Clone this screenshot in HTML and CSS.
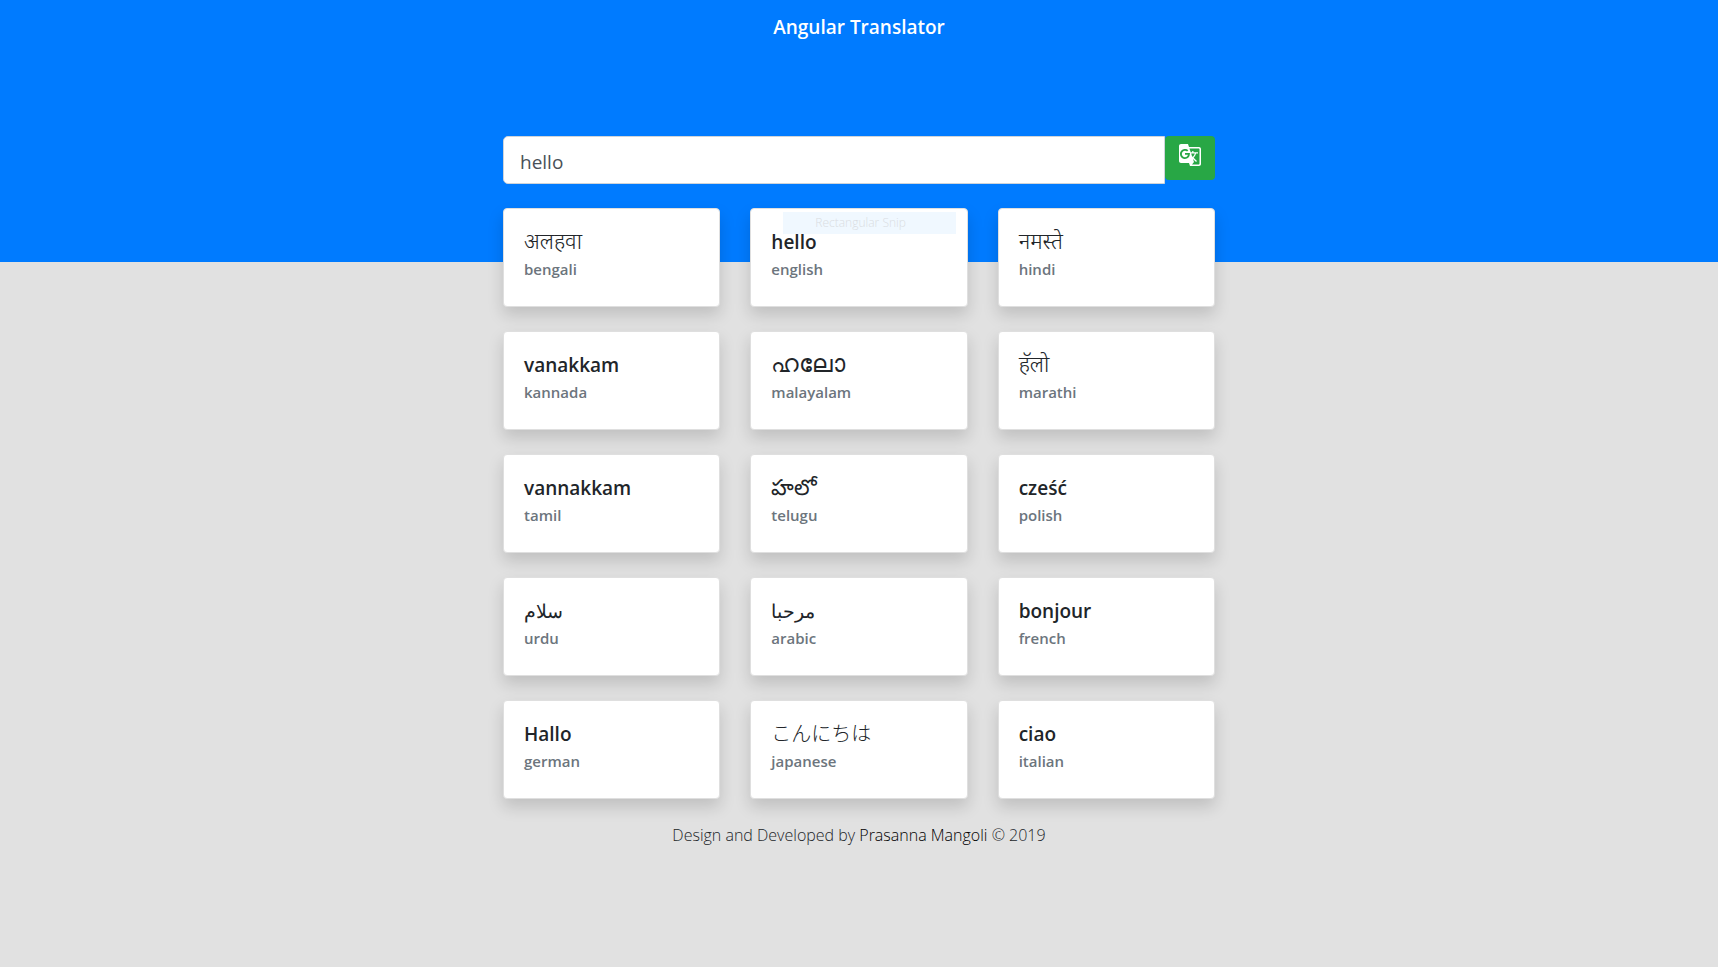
FILE: index.html
```html
<!DOCTYPE html>
<html lang="en">
<head>
<meta charset="utf-8">
<title>Angular Translator</title>
<link rel="stylesheet" href="styles.css">
</head>
<body>
<header class="hero"><h1 class="brand">Angular Translator</h1></header>
<main class="content">
  <form class="search">
    <input class="search-input" type="text" value="hello" aria-label="Text to translate">
    <button class="search-button" type="button" aria-label="Translate">
      <svg class="search-icon" viewBox="0 0 24 24" aria-hidden="true"><path fill="currentColor" d="M21 4H11l-1-3H3c-1.100 0-2 .9-2 2v15c0 1.100.9 2 2 2h8l1 3h9c1.100 0 2-.9 2-2V6c0-1.100-.9-2-2-2zM7 16c-2.760 0-5-2.240-5-5s2.240-5 5-5c1.350 0 2.480.5 3.350 1.300L9.030 8.570c-.38-.36-1.040-.78-2.030-.78-1.740 0-3.150 1.440-3.150 3.210S5.260 14.210 7 14.210c2.010 0 2.840-1.440 2.920-2.410H7v-1.710h4.680c.7.310.12.610.12 1.020C11.800 13.970 9.890 16 7 16zm6.170-5.420h3.700c-.43 1.250-1.110 2.430-2.050 3.470-.31-.35-.6-.72-.86-1.100l-.79-2.370zm8.330 9.920c0 .55-.45 1-1 1H14l2-2.500-1.040-3.100 3.100 3.100.92-.92-3.300-3.250.02-.02c1.130-1.250 1.930-2.690 2.400-4.220H20v-1.300h-4.530V8h-1.290v1.290h-1.440L11.460 5.500h9.040c.55 0 1 .45 1 1v14z"/></svg>
    </button>
  </form>
  <section class="cards" aria-label="Translations">
    <article class="card"><h2 class="word indic">अलहवा</h2><p class="lang">bengali</p></article>
    <article class="card"><span class="snip">Rectangular Snip</span><h2 class="word">hello</h2><p class="lang">english</p></article>
    <article class="card"><h2 class="word indic">नमस्ते</h2><p class="lang">hindi</p></article>
    <article class="card"><h2 class="word">vanakkam</h2><p class="lang">kannada</p></article>
    <article class="card"><h2 class="word malayalam">ഹലോ</h2><p class="lang">malayalam</p></article>
    <article class="card"><h2 class="word indic">हॅलो</h2><p class="lang">marathi</p></article>
    <article class="card"><h2 class="word">vannakkam</h2><p class="lang">tamil</p></article>
    <article class="card"><h2 class="word indic">హలో</h2><p class="lang">telugu</p></article>
    <article class="card"><h2 class="word">cześć</h2><p class="lang">polish</p></article>
    <article class="card"><h2 class="word arabic">سلام</h2><p class="lang">urdu</p></article>
    <article class="card"><h2 class="word arabic">مرحبا</h2><p class="lang">arabic</p></article>
    <article class="card"><h2 class="word">bonjour</h2><p class="lang">french</p></article>
    <article class="card"><h2 class="word">Hallo</h2><p class="lang">german</p></article>
    <article class="card"><h2 class="word japanese">こんにちは</h2><p class="lang">japanese</p></article>
    <article class="card"><h2 class="word">ciao</h2><p class="lang">italian</p></article>
  </section>
</main>
<footer class="footer">Design and Developed by <a class="author" href="#">Prasanna Mangoli</a> © 2019</footer>
</body>
</html>
```
FILE: styles.css
```css
* { box-sizing: border-box; }

body {
  margin: 0;
  min-height: 100vh;
  background: #e1e1e1;
  color: #212529;
  font: 400 16px/24px "Open Sans", "Noto Sans", "Noto Sans CJK JP", sans-serif;
}

.hero {
  height: 262px;
  padding-top: 12px;
  background: #007bff;
  text-align: center;
}

.brand {
  margin: 0;
  color: #fff;
  font-size: 19px;
  font-weight: 600;
  line-height: 30px;
}

.content {
  max-width: 744px;
  margin: -126px auto 0;
  padding: 0 16px;
}

.search {
  display: flex;
  align-items: flex-start;
  margin-bottom: 24px;
}

.search-input {
  flex: 1;
  min-width: 0;
  height: 48px;
  padding: 11px 16px 7px;
  border: 1px solid #ced4da;
  border-radius: 5px 0 0 5px;
  background: #fff;
  color: #495057;
  font: inherit;
  font-size: 19px;
  line-height: 28px;
}

.search-button {
  display: flex;
  width: 50px;
  height: 44px;
  padding: 7px 13px;
  border: 0;
  border-radius: 4px;
  background: #28a745;
  color: #fff;
}

.search-icon { width: 24px; height: 24px; }

.cards {
  display: grid;
  grid-template-columns: repeat(3, 1fr);
  gap: 24px 30px;
}

.card {
  position: relative;
  padding: 21px 20px 27px;
  border: 1px solid #dfdfdf;
  border-radius: 4px;
  background: #fff;
  box-shadow: 0 8px 16px rgba(0, 0, 0, 0.15);
}

.word {
  position: relative;
  margin: 0 0 6px;
  font-size: 19px;
  font-weight: 600;
  line-height: 24px;
}

.indic,
.malayalam {
  margin-bottom: 10px;
  font-weight: 300;
  line-height: 20px;
}

.indic { font-size: 22px; }
.malayalam { font-size: 24px; }
.japanese { font-size: 20px; font-weight: 300; }
.arabic { font-weight: 500; }

.lang {
  margin: 0;
  color: #6c757d;
  font-size: 15px;
  font-weight: 600;
  line-height: 19px;
}

.snip {
  position: absolute;
  top: 3px;
  left: 32px;
  width: 173px;
  padding-left: 32px;
  background: #f0f8ff;
  color: #dadde2;
  font-size: 12px;
  font-weight: 300;
  line-height: 22px;
}

.footer {
  padding: 24px 16px;
  font-weight: 300;
  text-align: center;
}

.author { color: #000; text-decoration: none; }
```
